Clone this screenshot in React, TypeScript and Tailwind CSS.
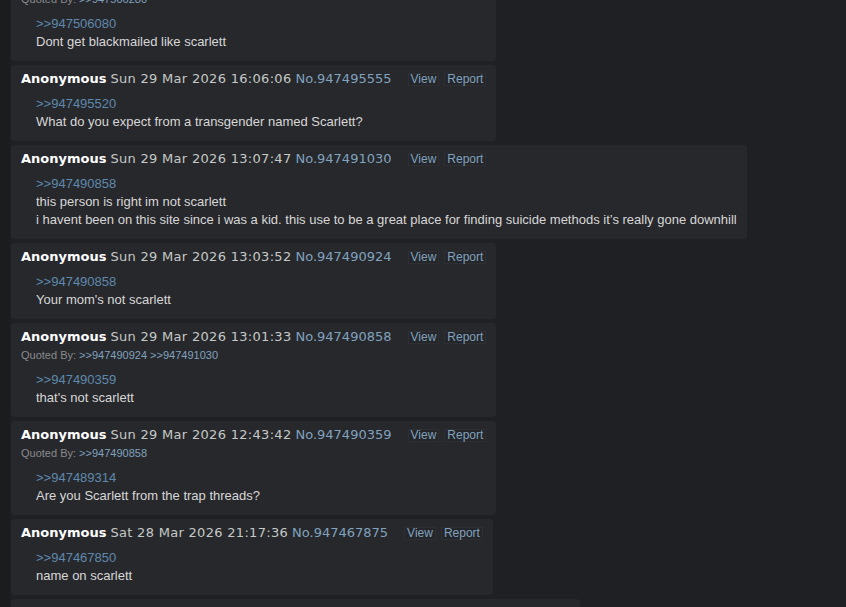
import React from "react";

type Post = {
  date: string;
  no: string;
  quotedBy?: string[];
  quote: string;
  lines: string[];
};

const posts: Post[] = [
  {
    date: "Sun 29 Mar 2026 16:12:40",
    no: "947506155",
    quotedBy: ["947506280"],
    quote: "947506080",
    lines: ["Dont get blackmailed like scarlett"],
  },
  {
    date: "Sun 29 Mar 2026 16:06:06",
    no: "947495555",
    quote: "947495520",
    lines: ["What do you expect from a transgender named Scarlett?"],
  },
  {
    date: "Sun 29 Mar 2026 13:07:47",
    no: "947491030",
    quote: "947490858",
    lines: [
      "this person is right im not scarlett",
      "i havent been on this site since i was a kid. this use to be a great place for finding suicide methods it\u2019s really gone downhill",
    ],
  },
  {
    date: "Sun 29 Mar 2026 13:03:52",
    no: "947490924",
    quote: "947490858",
    lines: ["Your mom's not scarlett"],
  },
  {
    date: "Sun 29 Mar 2026 13:01:33",
    no: "947490858",
    quotedBy: ["947490924", "947491030"],
    quote: "947490359",
    lines: ["that's not scarlett"],
  },
  {
    date: "Sun 29 Mar 2026 12:43:42",
    no: "947490359",
    quotedBy: ["947490858"],
    quote: "947489314",
    lines: ["Are you Scarlett from the trap threads?"],
  },
  {
    date: "Sat 28 Mar 2026 21:17:36",
    no: "947467875",
    quote: "947467850",
    lines: ["name on scarlett"],
  },
  {
    date: "Sat 28 Mar 2026 21:05:11",
    no: "947467850",
    quote: "947467702",
    lines: [
      "she got found out years ago and people still keep bringing her up in every single thread here!",
    ],
  },
];

function PostCard({ p }: { p: Post }) {
  return (
    <div className="rounded-[4px] bg-[#27282c] pt-[5px] pb-[10px] pl-[10px] pr-[10px]">
      <div className="flex h-[18px] items-center whitespace-nowrap font-['DejaVu_Sans',sans-serif] text-[13px] leading-[18px]">
        <span className="font-bold text-white">Anonymous</span>
        <span className="ml-[4px] tracking-[0.3px] text-[#c5c8c6]">{p.date}</span>
        <span className="ml-[4px] text-[#81a2be]">No.{p.no}</span>
        <span className="ml-[16px] flex gap-[5px] font-['Liberation_Sans',Arial,sans-serif] text-[12px]">
          <span className="border border-[#2e2f34] bg-[#25262a] px-[2px] leading-[11px] text-[#81a2be]">
            View
          </span>
          <span className="border border-[#2e2f34] bg-[#25262a] px-[2px] leading-[11px] text-[#81a2be]">
            Report
          </span>
        </span>
      </div>
      {p.quotedBy && (
        <div className="h-[18px] whitespace-nowrap font-['Liberation_Sans',Arial,sans-serif] text-[11px] leading-[18px] text-[#8a8b8d]">
          Quoted By:{" "}
          {p.quotedBy.map((q, i) => (
            <span key={q} className="text-[#81a2be]">
              {i > 0 ? " " : ""}&gt;&gt;{q}
            </span>
          ))}
        </div>
      )}
      <div className="mt-[7px] pl-[15px] font-['Liberation_Sans',Arial,sans-serif] text-[13px] leading-[18px] text-[#d7d7d7]">
        <div className="text-[#5f89ac]">&gt;&gt;{p.quote}</div>
        {p.lines.map((l, i) => (
          <div key={i} className="whitespace-nowrap">
            {l}
          </div>
        ))}
      </div>
    </div>
  );
}

export default function App() {
  return (
    <div className="flex h-[607px] w-full overflow-hidden bg-[#1f2023]">
      <div className="w-[10px] shrink-0 bg-[#1b1c1e]" />
      <div className="ml-px mt-[-33px] flex flex-col items-start gap-[4px]">
        {posts.map((p) => (
          <PostCard key={p.no} p={p} />
        ))}
      </div>
    </div>
  );
}
